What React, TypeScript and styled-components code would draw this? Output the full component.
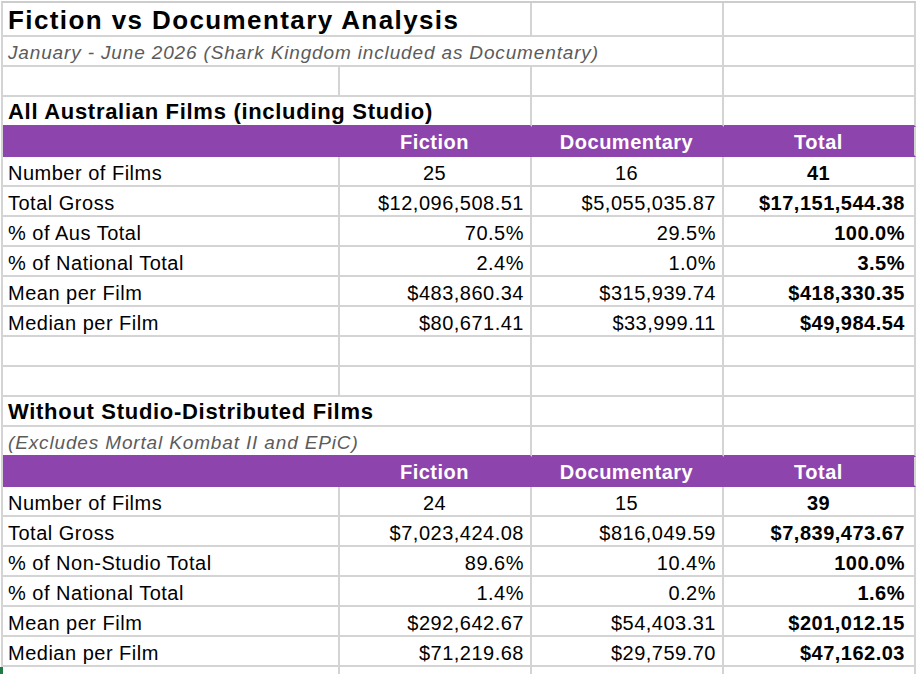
import React from "react";
import styled, { createGlobalStyle } from "styled-components";

const PURPLE = "#8e44ad";
const GRID = "#d4d4d4";

type Row = { label: string; values: string[]; center?: boolean };

const allAustralian: Row[] = [
  { label: "Number of Films", values: ["25", "16", "41"], center: true },
  { label: "Total Gross", values: ["$12,096,508.51", "$5,055,035.87", "$17,151,544.38"] },
  { label: "% of Aus Total", values: ["70.5%", "29.5%", "100.0%"] },
  { label: "% of National Total", values: ["2.4%", "1.0%", "3.5%"] },
  { label: "Mean per Film", values: ["$483,860.34", "$315,939.74", "$418,330.35"] },
  { label: "Median per Film", values: ["$80,671.41", "$33,999.11", "$49,984.54"] },
];

const withoutStudio: Row[] = [
  { label: "Number of Films", values: ["24", "15", "39"], center: true },
  { label: "Total Gross", values: ["$7,023,424.08", "$816,049.59", "$7,839,473.67"] },
  { label: "% of Non-Studio Total", values: ["89.6%", "10.4%", "100.0%"] },
  { label: "% of National Total", values: ["1.4%", "0.2%", "1.6%"] },
  { label: "Mean per Film", values: ["$292,642.67", "$54,403.31", "$201,012.15"] },
  { label: "Median per Film", values: ["$71,219.68", "$29,759.70", "$47,162.03"] },
];

const GlobalStyle = createGlobalStyle`
  * { box-sizing: border-box; }
  html, body {
    margin: 0;
    padding: 0;
    background: #ffffff;
    overflow: hidden;
  }
  body {
    font-family: "Liberation Sans", Arial, sans-serif;
    color: #000000;
  }
`;

const Sheet = styled.div`
  position: relative;
  width: 918px;
  height: 674px;
  padding: 1px 0 0 1px;
  overflow: hidden;
`;

const Grid = styled.table`
  width: 915px;
  table-layout: fixed;
  border-collapse: separate;
  border-spacing: 0;
  border-top: 2px solid #cccccc;
  border-left: 2px solid ${GRID};
`;

const Cell = styled.td<{
  $align?: "left" | "center" | "right";
  $bold?: boolean;
  $height?: number;
  $edge?: string;
  $inset?: number;
}>`
  height: ${(p) => p.$height ?? 30}px;
  padding: 0 ${(p) => p.$inset ?? 6}px 1px 5px;
  border-right: 2px solid ${GRID};
  border-bottom: 2px solid ${(p) => p.$edge ?? GRID};
  text-align: ${(p) => p.$align ?? "left"};
  vertical-align: bottom;
  font-size: 20px;
  line-height: 22px;
  letter-spacing: 0.5px;
  font-weight: ${(p) => (p.$bold ? 700 : 400)};
  white-space: nowrap;
  overflow: visible;
`;

const Title = styled(Cell)`
  font-size: 26px;
  line-height: 30px;
  font-weight: 700;
  letter-spacing: 1.4px;
  padding-bottom: 0;
`;

const Subtitle = styled(Cell)`
  font-size: 19px;
  font-style: italic;
  color: #5b5b5b;
  letter-spacing: 0.85px;
  line-height: 23px;
`;

const SectionTitle = styled(Cell)`
  font-size: 22px;
  font-weight: 700;
  letter-spacing: 0.7px;
  line-height: 23px;
  padding-bottom: 2px;
`;

const HeadCell = styled(Cell)<{ $last?: boolean }>`
  background: ${PURPLE};
  color: #ffffff;
  font-weight: 700;
  text-align: center;
  padding-bottom: 2px;
  border-bottom-color: ${PURPLE};
  border-right-color: ${(p) => (p.$last ? GRID : PURPLE)};
`;

const SelectionMark = styled.div`
  position: absolute;
  left: 0;
  top: 667px;
  width: 3px;
  height: 10px;
  background: #1f7a45;
`;

const Empty = ({ n, edge }: { n: number; edge?: string }) => (
  <>
    {Array.from({ length: n }).map((_, i) => (
      <Cell key={i} $edge={edge} />
    ))}
  </>
);

const HeaderRow = () => (
  <tr>
    <HeadCell />
    <HeadCell>Fiction</HeadCell>
    <HeadCell>Documentary</HeadCell>
    <HeadCell $last>Total</HeadCell>
  </tr>
);

const DataRows = ({ rows }: { rows: Row[] }) => (
  <>
    {rows.map((row) => (
      <tr key={row.label}>
        <Cell>{row.label}</Cell>
        {row.values.map((v, i) => (
          <Cell
            key={i}
            $align={row.center ? "center" : "right"}
            $bold={i === 2}
            $inset={i === 2 && !row.center ? 9 : 6}
          >
            {v}
          </Cell>
        ))}
      </tr>
    ))}
  </>
);

const App = () => {
  return (
    <Sheet>
      <GlobalStyle />
      <Grid>
        <colgroup>
          <col style={{ width: 337 }} />
          <col style={{ width: 192 }} />
          <col style={{ width: 192 }} />
          <col style={{ width: 192 }} />
        </colgroup>
        <tbody>
          <tr>
            <Title colSpan={2} $height={34}>
              Fiction vs Documentary Analysis
            </Title>
            <Empty n={2} />
          </tr>
          <tr>
            <Subtitle colSpan={3}>
              January - June 2026 (Shark Kingdom included as Documentary)
            </Subtitle>
            <Empty n={1} />
          </tr>
          <tr>
            <Empty n={4} />
          </tr>
          <tr>
            <SectionTitle colSpan={2} $edge={PURPLE}>
              All Australian Films (including Studio)
            </SectionTitle>
            <Empty n={2} edge={PURPLE} />
          </tr>
          <HeaderRow />
          <DataRows rows={allAustralian} />
          <tr>
            <Empty n={4} />
          </tr>
          <tr>
            <Empty n={4} />
          </tr>
          <tr>
            <SectionTitle colSpan={2}>Without Studio-Distributed Films</SectionTitle>
            <Empty n={2} />
          </tr>
          <tr>
            <Subtitle colSpan={2} $edge={PURPLE}>
              (Excludes Mortal Kombat II and EPiC)
            </Subtitle>
            <Empty n={2} edge={PURPLE} />
          </tr>
          <HeaderRow />
          <DataRows rows={withoutStudio} />
          <tr>
            <Empty n={4} />
          </tr>
        </tbody>
      </Grid>
      <SelectionMark />
    </Sheet>
  );
};

export default App;
